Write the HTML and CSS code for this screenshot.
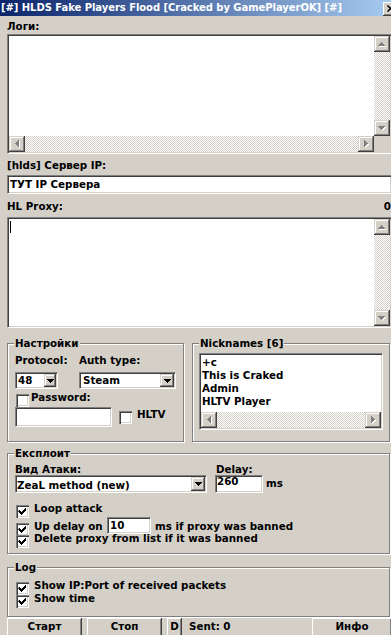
FILE: index.html
```html
<!DOCTYPE html>
<html lang="ru">
<head>
<meta charset="utf-8">
<title>HLDS Fake Players Flood</title>
<link rel="stylesheet" href="styles.css">
</head>
<body>
<svg class="defs" aria-hidden="true">
  <symbol id="up-dis" viewBox="0 0 16 16">
    <path fill="#fff" transform="translate(1 1)" d="M7 6h1v1h1v1h1v1h1v1H4V9h1V8h1V7h1z"/>
    <path fill="#808080" d="M7 6h1v1h1v1h1v1h1v1H4V9h1V8h1V7h1z"/>
  </symbol>
  <symbol id="down-dis" viewBox="0 0 16 16">
    <path fill="#fff" transform="translate(1 1)" d="M4 6h7v1h-1v1h-1v1h-1v1H7V9H6V8H5V7H4z"/>
    <path fill="#808080" d="M4 6h7v1h-1v1h-1v1h-1v1H7V9H6V8H5V7H4z"/>
  </symbol>
  <symbol id="left-dis" viewBox="0 0 16 16">
    <path fill="#fff" transform="translate(1 1)" d="M6 7h1V6h1V5h1V4h1v7H9v-1H8V9H7V8H6z"/>
    <path fill="#808080" d="M6 7h1V6h1V5h1V4h1v7H9v-1H8V9H7V8H6z"/>
  </symbol>
  <symbol id="right-dis" viewBox="0 0 16 16">
    <path fill="#fff" transform="translate(1 1)" d="M6 4h1v1h1v1h1v1h1v1H9v1H8v1H7v1H6z"/>
    <path fill="#808080" d="M6 4h1v1h1v1h1v1h1v1H9v1H8v1H7v1H6z"/>
  </symbol>
  <symbol id="drop" viewBox="0 0 7 4">
    <path fill="#000" d="M0 0h7v1h-1v1h-1v1h-1v1H3V3H2V2H1V1H0z"/>
  </symbol>
  <symbol id="tick" viewBox="0 0 13 13">
    <path fill="#000" d="M3 5h1v1h1v1h1v-1h1v-1h1v-1h1v-1h1v3h-1v1h-1v1h-1v1h-1v1h-1v-1h-1v-1h-1v-1h-1z"/>
  </symbol>
</svg>

<div class="titlebar">
  <span class="title">[#] HLDS Fake Players Flood [Cracked by GamePlayerOK] [#]</span>
  <span class="close-btn"><svg width="16" height="14" viewBox="0 0 16 14"><path d="M4.5 3.5l6 6M10.5 3.5l-6 6" stroke="#000" stroke-width="1.5"/></svg></span>
</div>

<div class="client">
  <div class="lbl lbl-logs">Логи:</div>
  <div class="memo memo-logs">
    <div class="memo-area"></div>
    <div class="vscroll">
      <span class="sbtn"><svg width="16" height="16"><use href="#up-dis"/></svg></span>
      <span class="track"></span>
      <span class="sbtn"><svg width="16" height="16"><use href="#down-dis"/></svg></span>
    </div>
    <div class="hscroll">
      <span class="sbtn"><svg width="16" height="16"><use href="#left-dis"/></svg></span>
      <span class="track"></span>
      <span class="sbtn"><svg width="16" height="16"><use href="#right-dis"/></svg></span>
    </div>
    <div class="corner"></div>
  </div>

  <div class="lbl lbl-server">[hlds] Сервер IP:</div>
  <div class="edit edit-server">ТУТ IP Сервера</div>

  <div class="lbl lbl-proxy"><span>HL Proxy:</span><span>0</span></div>
  <div class="memo memo-proxy">
    <div class="memo-area"><span class="caret"></span></div>
    <div class="vscroll">
      <span class="sbtn"><svg width="16" height="16"><use href="#up-dis"/></svg></span>
      <span class="track"></span>
      <span class="sbtn"><svg width="16" height="16"><use href="#down-dis"/></svg></span>
    </div>
  </div>

  <div class="groups">
    <fieldset class="grp grp-settings">
      <legend>Настройки</legend>
      <div class="set-labels"><span class="set-l1">Protocol:</span><span>Auth type:</span></div>
      <div class="set-combos">
        <div class="combo combo-proto"><span class="combo-text">48</span><span class="combo-btn btn-sm"><svg width="7" height="4"><use href="#drop"/></svg></span></div>
        <div class="combo combo-auth"><span class="combo-text">Steam</span><span class="combo-btn"><svg width="7" height="4"><use href="#drop"/></svg></span></div>
      </div>
      <div class="check pw-check"><span class="cb"></span><span class="txt txt-pw">Password:</span></div>
      <div class="pw-row">
        <div class="edit edit-pw"></div>
        <div class="check hltv-check"><span class="cb"></span><span class="txt txt-hltv">HLTV</span></div>
      </div>
    </fieldset>

    <fieldset class="grp grp-nicks">
      <legend>Nicknames [6]</legend>
      <div class="listbox">
        <div class="list-items">
          <div>+c</div>
          <div>This is Craked</div>
          <div>Admin</div>
          <div>HLTV Player</div>
        </div>
        <div class="hscroll">
          <span class="sbtn"><svg width="16" height="16"><use href="#left-dis"/></svg></span>
          <span class="track"></span>
          <span class="sbtn"><svg width="16" height="16"><use href="#right-dis"/></svg></span>
        </div>
      </div>
    </fieldset>
  </div>

  <fieldset class="grp grp-exploit">
    <legend>Експлоит</legend>
    <div class="ex-labels"><span class="ex-l1">Вид Атаки:</span><span>Delay:</span></div>
    <div class="ex-row">
      <div class="combo combo-attack"><span class="combo-text">ZeaL method (new)</span><span class="combo-btn"><svg width="7" height="4"><use href="#drop"/></svg></span></div>
      <div class="edit edit-delay">260</div>
      <span class="ms">ms</span>
    </div>
    <div class="check ex-check1"><span class="cb"><svg width="13" height="13"><use href="#tick"/></svg></span><span class="txt">Loop attack</span></div>
    <div class="check ex-check2">
      <span class="cb"><svg width="13" height="13"><use href="#tick"/></svg></span>
      <span class="txt txt-upd">Up delay on</span>
      <div class="edit edit-upd">10</div>
      <span class="txt txt-ms">ms if proxy was banned</span>
    </div>
    <div class="check ex-check3"><span class="cb"><svg width="13" height="13"><use href="#tick"/></svg></span><span class="txt">Delete proxy from list if it was banned</span></div>
  </fieldset>

  <fieldset class="grp grp-log">
    <legend>Log</legend>
    <div class="check log-check1"><span class="cb"><svg width="13" height="13"><use href="#tick"/></svg></span><span class="txt">Show IP:Port of received packets</span></div>
    <div class="check log-check2"><span class="cb"><svg width="13" height="13"><use href="#tick"/></svg></span><span class="txt">Show time</span></div>
  </fieldset>

  <div class="buttons">
    <span class="btn btn-start">Старт</span>
    <span class="btn btn-stop">Стоп</span>
    <span class="btn btn-d">D</span>
    <span class="sent">Sent: 0</span>
    <span class="btn btn-info">Инфо</span>
  </div>
</div>
</body>
</html>
```

FILE: styles.css
```css
* { box-sizing: border-box; }
html, body { margin: 0; padding: 0; }
body {
  width: 391px;
  height: 635px;
  overflow: hidden;
  background: #d4d0c8;
  color: #000;
  font-family: "DejaVu Sans", "Liberation Sans", sans-serif;
  font-weight: bold;
  font-size: 10.3px;
  line-height: 13px;
}
.defs { position: absolute; width: 0; height: 0; overflow: hidden; }

/* title bar */
.titlebar {
  display: flex;
  height: 16px;
  overflow: hidden;
  background: linear-gradient(to right, #0a246a, #a6caf0);
}
.title {
  flex: 1;
  color: #fff;
  font-size: 10px;
  line-height: 16px;
  padding-left: 1px;
  letter-spacing: -0.05px;
  white-space: nowrap;
}
.close-btn {
  flex: none;
  width: 16px;
  height: 14px;
  margin: 2px -8px 0 0;
  background: #d4d0c8;
  box-shadow: inset -1px -1px #404040, inset 1px 1px #fff, inset -2px -2px #808080;
}
.close-btn svg { display: block; }

/* client area */
.client { width: 392px; padding-left: 7px; }
.lbl { height: 13px; white-space: nowrap; }
.lbl-logs { margin-top: 4px; }
.lbl-server { margin-top: 5px; }
.lbl-proxy { margin-top: 6px; width: 384px; display: flex; justify-content: space-between; }

/* sunken 3D edge shared by memo / edit / combo / list */
.memo, .edit, .combo, .listbox {
  background: #fff;
  border: 1px solid;
  border-color: #808080 #fff #fff #808080;
  box-shadow: inset 1px 1px #404040, inset -1px -1px #d4d0c8;
  padding: 1px;
}

.memo {
  width: 385px;
  display: grid;
  grid-template-columns: minmax(0, 1fr) 16px;
}
.memo-logs { margin-top: 1px; height: 120px; grid-template-rows: minmax(0, 1fr) 16px; }
.memo-proxy { margin-top: 4px; height: 111px; grid-template-rows: minmax(0, 1fr); }
.memo-area { background: #fff; }
.caret { display: block; width: 1px; height: 12px; margin: 2px 0 0 1px; background: #000; }

.vscroll { display: flex; flex-direction: column; }
.hscroll { display: flex; }
.track {
  flex: 1;
  background-color: #fff;
  background-image: repeating-conic-gradient(#d4d0c8 0 25%, #fff 0 50%);
  background-size: 2px 2px;
}
.sbtn {
  flex: none;
  width: 16px;
  height: 16px;
  background: #d4d0c8;
  box-shadow: inset -1px -1px #404040, inset 1px 1px #d4d0c8, inset -2px -2px #808080, inset 2px 2px #fff;
}
.sbtn svg { display: block; }
.corner { background: #d4d0c8; }

/* edits */
.edit { padding: 2px; white-space: nowrap; overflow: hidden; }
.edit-server { margin-top: 3px; width: 385px; height: 19px; }

/* group boxes */
.groups { display: flex; margin-top: 9px; }
.grp {
  margin: 0;
  padding: 0 0 0 7px;
  min-inline-size: 0;
  border: 1px solid #808080;
  box-shadow: inset 1px 1px #fff, 1px 1px #fff;
}
.grp legend {
  padding: 0 1px;
  margin-left: -1px;
  line-height: 13px;
  background: #d4d0c8;
}
.grp-settings { width: 177px; height: 105px; }
.grp-nicks { width: 198px; height: 105px; margin-left: 8px; }
.grp-exploit { width: 383px; height: 107px; margin-top: 5px; }
.grp-log { width: 383px; height: 56px; margin-top: 7px; }

/* combos */
.combo { display: flex; height: 17px; }
.combo-text { flex: 1; padding-left: 1px; line-height: 13px; white-space: nowrap; overflow: hidden; }
.combo-btn {
  flex: none;
  width: 14px;
  display: flex;
  align-items: center;
  justify-content: center;
  background: #d4d0c8;
  box-shadow: inset -1px -1px #404040, inset 1px 1px #d4d0c8, inset -2px -2px #808080, inset 2px 2px #fff;
}
.combo-btn svg { display: block; }
.btn-sm { width: 12px; }

/* settings group */
.set-labels { display: flex; margin-top: 4px; height: 13px; }
.set-l1 { width: 64px; }
.set-combos { display: flex; margin-top: 5px; }
.combo-proto { width: 43px; }
.combo-auth { width: 97px; margin-left: 21px; }
.combo-auth .combo-text { padding-left: 2px; }

/* checkboxes */
.check { display: flex; align-items: flex-start; height: 13px; white-space: nowrap; }
.cb {
  flex: none;
  width: 13px;
  height: 13px;
  background: #fff;
  box-shadow: inset 1px 1px #808080, inset 2px 2px #404040, inset -1px -1px #fff, inset -2px -2px #d4d0c8;
}
.cb svg { display: block; }
.check .txt { margin-top: -3px; margin-left: 5px; }
.pw-check { margin-top: 5px; margin-left: 1px; }
.check .txt-pw { margin-left: 2px; }
.pw-row { display: flex; align-items: center; }
.edit-pw { width: 97px; height: 20px; }
.hltv-check { margin-left: 7px; }

/* nicknames */
.listbox {
  margin-top: 3px;
  margin-left: -1px;
  width: 184px;
  height: 77px;
  display: grid;
  grid-template-rows: minmax(0, 1fr) 16px;
}
.list-items { padding: 1px 0 0 1px; white-space: nowrap; overflow: hidden; }

/* exploit group */
.ex-labels { display: flex; margin-top: 4px; height: 11px; line-height: 11px; }
.ex-l1 { width: 201px; }
.ex-row { display: flex; align-items: flex-start; }
.combo-attack { width: 192px; height: 18px; }
.combo-attack .combo-text { padding: 2px 0 0 0; }
.edit-delay { width: 48px; height: 18px; margin-left: 8px; padding: 0 1px; line-height: 11px; }
.ms { margin-left: 3px; margin-top: 2px; }
.ex-check1 { margin-top: 12px; margin-left: 1px; height: 12px; }
.ex-check2 { margin-left: 1px; height: 18px; }
.ex-check2 .cb { margin-top: 6px; }
.ex-check2 .txt { margin-top: 3px; }
.check .txt-upd { width: 73px; flex: none; }
.edit-upd { width: 44px; height: 17px; padding: 1px 2px; }
.check .txt-ms { margin-left: 4px; }
.ex-check3 { margin-left: 1px; }

/* log group */
.log-check1 { margin-top: 8px; margin-left: 1px; }
.log-check2 { margin-left: 1px; }

/* bottom buttons */
.buttons { display: flex; margin-top: 1px; height: 22px; width: 385px; }
.btn {
  flex: none;
  height: 22px;
  padding-top: 2px;
  text-align: center;
  background: #d4d0c8;
  box-shadow: inset -1px -1px #404040, inset 1px 1px #fff, inset -2px -2px #808080;
}
.btn-start { width: 75px; }
.btn-stop { width: 75px; margin-left: 5px; }
.btn-d { width: 15px; margin-left: 5px; }
.sent { margin-left: 7px; padding-top: 2px; white-space: nowrap; }
.btn-info { width: 80px; margin-left: auto; }
```
